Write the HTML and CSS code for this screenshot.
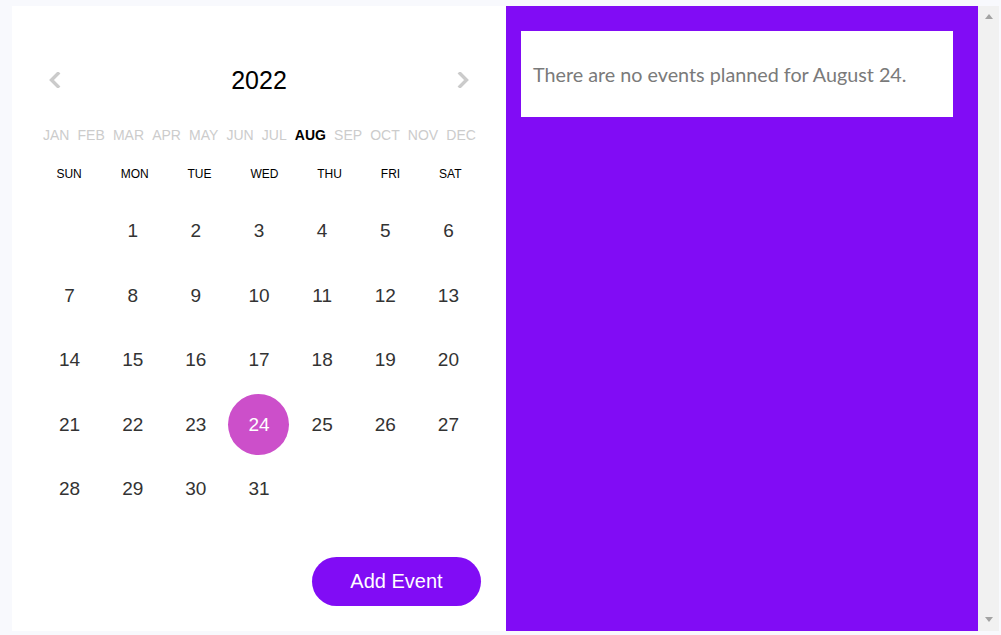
FILE: index.html
```html
<!DOCTYPE html>
<html lang="en">
<head>
<meta charset="utf-8">
<title>Calendar</title>
<link rel="stylesheet" href="styles.css">
</head>
<body>
<div class="app">
  <section class="cal">
    <div class="year-row">
      <button class="nav prev" aria-label="Previous year">
        <svg width="14" height="16" viewBox="0 0 14 16"><polyline points="10,1.5 3.5,8 10,14.5" fill="none" stroke="#cbcbcb" stroke-width="3.4" stroke-linecap="square"/></svg>
      </button>
      <div class="year">2022</div>
      <button class="nav next" aria-label="Next year">
        <svg width="14" height="16" viewBox="0 0 14 16"><polyline points="4,1.5 10.5,8 4,14.5" fill="none" stroke="#cbcbcb" stroke-width="3.4" stroke-linecap="square"/></svg>
      </button>
    </div>
    <div class="months">
      <span>JAN</span><span>FEB</span><span>MAR</span><span>APR</span><span>MAY</span><span>JUN</span><span>JUL</span><span class="active">AUG</span><span>SEP</span><span>OCT</span><span>NOV</span><span>DEC</span>
    </div>
    <div class="weekdays">
      <span>SUN</span><span>MON</span><span>TUE</span><span>WED</span><span>THU</span><span>FRI</span><span>SAT</span>
    </div>
    <div class="days">
      <span class="day empty"></span>
      <span class="day">1</span><span class="day">2</span><span class="day">3</span><span class="day">4</span><span class="day">5</span><span class="day">6</span>
      <span class="day">7</span><span class="day">8</span><span class="day">9</span><span class="day">10</span><span class="day">11</span><span class="day">12</span><span class="day">13</span>
      <span class="day">14</span><span class="day">15</span><span class="day">16</span><span class="day">17</span><span class="day">18</span><span class="day">19</span><span class="day">20</span>
      <span class="day">21</span><span class="day">22</span><span class="day">23</span><span class="day selected"><span class="dot">24</span></span><span class="day">25</span><span class="day">26</span><span class="day">27</span>
      <span class="day">28</span><span class="day">29</span><span class="day">30</span><span class="day">31</span>
    </div>
    <div class="actions">
      <button class="add">Add Event</button>
    </div>
  </section>
  <section class="events">
    <div class="card">There are no events planned for August 24.</div>
  </section>
  <div class="scrollbar" aria-hidden="true">
    <span class="arrow up"></span>
    <span class="arrow down"></span>
  </div>
</div>
</body>
</html>
```

FILE: styles.css
```css
* { box-sizing: border-box; }
html, body { margin: 0; padding: 0; }
body {
  background: #f8f9fd;
  padding: 6px 2px 0 12px;
  font-family: "Liberation Sans", Arial, sans-serif;
  overflow: hidden;
}
.app {
  display: flex;
  width: 987px;
  height: 625px;
  background: #fff;
}
.cal {
  width: 494px;
  flex: none;
  background: #fff;
  padding: 59px 25px 25px 25px;
  display: flex;
  flex-direction: column;
}
.year-row {
  height: 30px;
  display: flex;
  align-items: center;
  justify-content: space-between;
  padding: 0 11px 0 11px;
}
.nav {
  border: 0;
  background: none;
  padding: 0;
  width: 14px;
  height: 16px;
  display: flex;
}
.year {
  font-size: 25px;
  line-height: 30px;
  color: #000;
}
.months {
  margin-top: 32px;
  height: 17px;
  line-height: 17px;
  display: flex;
  justify-content: space-between;
  padding: 0 5px 0 6px;
  font-size: 14px;
  color: #cccccc;
}
.months .active { color: #000; font-weight: bold; }
.weekdays {
  margin-top: 22px;
  height: 16px;
  line-height: 16px;
  display: flex;
  justify-content: space-around;
  font-size: 12px;
  color: #000;
}
.days {
  margin-top: 17px;
  display: grid;
  grid-template-columns: repeat(7, 1fr);
  grid-auto-rows: 64.5px;
  padding: 0 1px 0 1px;
}
.day {
  display: flex;
  align-items: center;
  justify-content: center;
  font-size: 19px;
  color: #333;
}
.dot {
  width: 61px;
  height: 61px;
  border-radius: 50%;
  background: #cc4fca;
  color: #fff;
  display: flex;
  align-items: center;
  justify-content: center;
}
.actions {
  margin-top: auto;
  display: flex;
  justify-content: flex-end;
}
.add {
  width: 169px;
  height: 49px;
  border: 0;
  border-radius: 25px;
  background: #810cf5;
  color: #fff;
  font-family: "Liberation Sans", Arial, sans-serif;
  font-size: 20px;
  padding: 0;
}
.events {
  flex: 1;
  background: #810cf5;
  padding: 25px 25px 25px 15px;
}
.card {
  background: #fff;
  height: 86px;
  padding: 0 12px;
  display: flex;
  align-items: center;
  font-family: Lato, "Open Sans", sans-serif;
  font-size: 19.75px;
  color: #7a7a7a;
}
.scrollbar {
  width: 21px;
  flex: none;
  background: #f1f1f1;
  display: flex;
  flex-direction: column;
  justify-content: space-between;
  align-items: center;
  padding: 8px 0 9px 1px;
}
.arrow {
  width: 0;
  height: 0;
  border-left: 4.5px solid transparent;
  border-right: 4.5px solid transparent;
}
.arrow.up { border-bottom: 5px solid #a3a3a3; }
.arrow.down { border-top: 5px solid #a3a3a3; }
```
